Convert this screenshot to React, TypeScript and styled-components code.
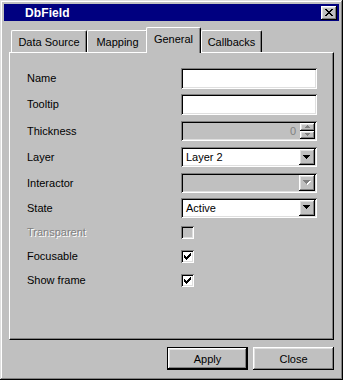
import React from 'react';
import styled, { createGlobalStyle } from 'styled-components';

const GlobalStyle = createGlobalStyle`
  html, body {
    margin: 0;
    padding: 0;
    background: #c0c0c0;
  }
  body {
    font-family: 'Liberation Sans', Arial, sans-serif;
    font-size: 11px;
    color: #000;
  }
`;

const raised = `
  box-shadow: inset -1px -1px #000, inset 1px 1px #fff, inset -2px -2px #808080, inset 2px 2px #dfdfdf;
`;

const sunken = `
  box-shadow: inset 1px 1px #808080, inset -1px -1px #fff, inset 2px 2px #000, inset -2px -2px #dfdfdf;
`;

const Window = styled.div`
  width: 343px;
  height: 380px;
  box-sizing: border-box;
  padding: 4px;
  background: #c0c0c0;
  box-shadow: inset -1px -1px #000, inset 1px 1px #dfdfdf, inset -2px -2px #808080, inset 2px 2px #fff;
  display: flex;
  flex-direction: column;
`;

const TitleBar = styled.div`
  height: 18px;
  background: #000080;
  display: flex;
  align-items: center;
  justify-content: space-between;
  padding: 0 2px 0 21px;
`;

const Title = styled.span`
  color: #fff;
  font-weight: bold;
  font-size: 12px;
  letter-spacing: 0.1px;
`;

const TitleButton = styled.div`
  width: 16px;
  height: 14px;
  background: #c0c0c0;
  ${raised}
  display: flex;
  align-items: center;
  justify-content: center;
  padding-bottom: 1px;
  box-sizing: border-box;
`;

const Body = styled.div`
  flex: 1;
  display: flex;
  flex-direction: column;
  padding: 6px 5px 6px 5px;
`;

const TabStrip = styled.div`
  height: 25px;
  display: flex;
  align-items: flex-end;
  padding-left: 2px;
  position: relative;
  z-index: 1;
`;

const Tab = styled.div<{ $w: number; $active?: boolean }>`
  width: ${p => p.$w}px;
  height: ${p => (p.$active ? 26 : 22)}px;
  margin: 0 0 ${p => (p.$active ? -1 : 0)}px ${p => (p.$active ? -2 : 0)}px;
  box-sizing: border-box;
  background: #c0c0c0;
  border-top: 1px solid #fff;
  border-left: 1px solid #fff;
  border-right: 1px solid #000;
  border-radius: 2px 2px 0 0;
  box-shadow: inset -1px 0 #808080;
  display: flex;
  align-items: center;
  justify-content: center;
  padding-bottom: ${p => (p.$active ? 3 : 0)}px;
  position: relative;
  z-index: ${p => (p.$active ? 2 : 0)};
`;

const Panel = styled.div`
  height: 288px;
  box-sizing: border-box;
  border-top: 1px solid #fff;
  border-left: 1px solid #fff;
  border-right: 1px solid #000;
  border-bottom: 1px solid #000;
  box-shadow: inset -1px -1px #808080;
  padding: 12px 0 0 17px;
  display: flex;
  flex-direction: column;
`;

const Row = styled.div<{ $h: number }>`
  height: ${p => p.$h}px;
  display: grid;
  grid-template-columns: 154px 136px;
  align-items: center;
`;

const Label = styled.span<{ $disabled?: boolean }>`
  color: ${p => (p.$disabled ? '#808080' : '#000')};
  text-shadow: ${p => (p.$disabled ? '1px 1px #fff' : 'none')};
`;

const Field = styled.div<{ $h: number; $disabled?: boolean }>`
  width: 136px;
  height: ${p => p.$h}px;
  box-sizing: border-box;
  padding: 2px;
  background: ${p => (p.$disabled ? '#c0c0c0' : '#fff')};
  ${sunken}
  display: flex;
  align-items: stretch;
`;

const FieldText = styled.div<{ $align?: 'left' | 'right'; $disabled?: boolean }>`
  flex: 1;
  display: flex;
  align-items: center;
  justify-content: ${p => (p.$align === 'right' ? 'flex-end' : 'flex-start')};
  padding: 0 4px 0 3px;
  color: ${p => (p.$disabled ? '#808080' : '#000')};
`;

const DropButton = styled.div`
  width: 16px;
  background: #c0c0c0;
  ${raised}
  display: flex;
  align-items: center;
  justify-content: center;
`;

const Spinner = styled.div`
  width: 15px;
  display: flex;
  flex-direction: column;
`;

const SpinHalf = styled.div`
  flex: 1;
  background: #c0c0c0;
  ${raised}
  display: flex;
  align-items: center;
  justify-content: center;
`;

const CheckBox = styled.div<{ $disabled?: boolean }>`
  width: 13px;
  height: 13px;
  box-sizing: border-box;
  padding: 3px 0 0 3px;
  background: ${p => (p.$disabled ? '#c0c0c0' : '#fff')};
  ${sunken}
  display: flex;
`;

const Footer = styled.div`
  margin-top: 7px;
  display: flex;
  justify-content: flex-end;
  gap: 5px;
`;

const Button = styled.div<{ $default?: boolean }>`
  width: 81px;
  height: 23px;
  box-sizing: border-box;
  background: #c0c0c0;
  border: ${p => (p.$default ? '1px solid #000' : 'none')};
  ${raised}
  display: flex;
  align-items: center;
  justify-content: center;
`;

const CloseGlyph = () => (
  <svg width="8" height="7" viewBox="0 0 8 7" shapeRendering="crispEdges">
    <path
      fill="#000"
      d="M0 0h2v1h-2z M6 0h2v1h-2z M1 1h2v1h-2z M5 1h2v1h-2z M2 2h4v1h-4z M3 3h2v1h-2z M2 4h4v1h-4z M1 5h2v1h-2z M5 5h2v1h-2z M0 6h2v1h-2z M6 6h2v1h-2z"
    />
  </svg>
);

const DownArrow = ({ disabled }: { disabled?: boolean }) => (
  <svg width="8" height="5" viewBox="0 0 8 5" shapeRendering="crispEdges">
    {disabled && (
      <path fill="#fff" d="M1 1h7v1h-7z M2 2h5v1h-5z M3 3h3v1h-3z M4 4h1v1h-1z" />
    )}
    <path
      fill={disabled ? '#808080' : '#000'}
      d="M0 0h7v1h-7z M1 1h5v1h-5z M2 2h3v1h-3z M3 3h1v1h-1z"
    />
  </svg>
);

const SpinArrow = ({ up }: { up?: boolean }) => (
  <svg width="5" height="3" viewBox="0 0 5 3" shapeRendering="crispEdges">
    <path
      fill="#808080"
      d={up ? 'M2 0h1v1h-1z M1 1h3v1h-3z M0 2h5v1h-5z' : 'M0 0h5v1h-5z M1 1h3v1h-3z M2 2h1v1h-1z'}
    />
  </svg>
);

const CheckMark = () => (
  <svg width="7" height="7" viewBox="0 0 7 7" shapeRendering="crispEdges">
    <path
      fill="#000"
      d="M0 2h1v3h-1z M1 3h1v3h-1z M2 4h1v3h-1z M3 3h1v3h-1z M4 2h1v3h-1z M5 1h1v3h-1z M6 0h1v3h-1z"
    />
  </svg>
);

const App: React.FC = () => {
  return (
    <>
      <GlobalStyle />
      <Window>
        <TitleBar>
          <Title>DbField</Title>
          <TitleButton>
            <CloseGlyph />
          </TitleButton>
        </TitleBar>

        <Body>
          <TabStrip>
            <Tab $w={76}>Data Source</Tab>
            <Tab $w={61}>Mapping</Tab>
            <Tab $w={55} $active>General</Tab>
            <Tab $w={61}>Callbacks</Tab>
          </TabStrip>

          <Panel>
            <Row $h={26}>
              <Label>Name</Label>
              <Field $h={21} />
            </Row>
            <Row $h={26}>
              <Label>Tooltip</Label>
              <Field $h={21} />
            </Row>
            <Row $h={27}>
              <Label>Thickness</Label>
              <Field $h={20} $disabled>
                <FieldText $align="right" $disabled>0</FieldText>
                <Spinner>
                  <SpinHalf><SpinArrow up /></SpinHalf>
                  <SpinHalf><SpinArrow /></SpinHalf>
                </Spinner>
              </Field>
            </Row>
            <Row $h={26}>
              <Label>Layer</Label>
              <Field $h={20}>
                <FieldText>Layer 2</FieldText>
                <DropButton><DownArrow /></DropButton>
              </Field>
            </Row>
            <Row $h={25}>
              <Label>Interactor</Label>
              <Field $h={20} $disabled>
                <FieldText />
                <DropButton><DownArrow disabled /></DropButton>
              </Field>
            </Row>
            <Row $h={25}>
              <Label>State</Label>
              <Field $h={20}>
                <FieldText>Active</FieldText>
                <DropButton><DownArrow /></DropButton>
              </Field>
            </Row>
            <Row $h={24}>
              <Label $disabled>Transparent</Label>
              <CheckBox $disabled />
            </Row>
            <Row $h={24}>
              <Label>Focusable</Label>
              <CheckBox><CheckMark /></CheckBox>
            </Row>
            <Row $h={24}>
              <Label>Show frame</Label>
              <CheckBox><CheckMark /></CheckBox>
            </Row>
          </Panel>

          <Footer>
            <Button $default>Apply</Button>
            <Button>Close</Button>
          </Footer>
        </Body>
      </Window>
    </>
  );
};

export default App;
